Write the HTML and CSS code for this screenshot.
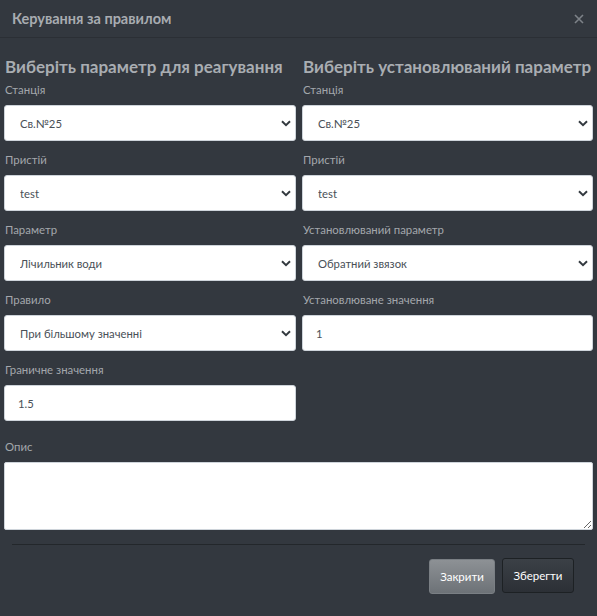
FILE: index.html
```html
<!DOCTYPE html>
<html lang="uk">
<head>
<meta charset="utf-8">
<title>Керування за правилом</title>
<link rel="stylesheet" href="styles.css">
</head>
<body>
<div class="modal">
  <div class="modal-header">
    <h5 class="modal-title">Керування за правилом</h5>
    <button class="close" type="button" aria-label="Close">
      <svg width="10" height="10" viewBox="0 0 10 10"><path d="M1 1L9 9M9 1L1 9" stroke="#7d8288" stroke-width="1.6"/></svg>
    </button>
  </div>
  <div class="modal-body">
    <div class="cols">
      <div class="col">
        <h4 class="col-title">Виберіть параметр для реагування</h4>
        <div class="group">
          <label class="lbl">Станція</label>
          <select class="ctl"><option>Св.№25</option></select>
        </div>
        <div class="group">
          <label class="lbl">Пристій</label>
          <select class="ctl"><option>test</option></select>
        </div>
        <div class="group">
          <label class="lbl">Параметр</label>
          <select class="ctl"><option>Лічильник води</option></select>
        </div>
        <div class="group">
          <label class="lbl">Правило</label>
          <select class="ctl"><option>При більшому значенні</option></select>
        </div>
        <div class="group">
          <label class="lbl">Граничне значення</label>
          <input class="ctl inp" type="text" value="1.5">
        </div>
      </div>
      <div class="col">
        <h4 class="col-title">Виберіть установлюваний параметр</h4>
        <div class="group">
          <label class="lbl">Станція</label>
          <select class="ctl"><option>Св.№25</option></select>
        </div>
        <div class="group">
          <label class="lbl">Пристій</label>
          <select class="ctl"><option>test</option></select>
        </div>
        <div class="group">
          <label class="lbl">Установлюваний параметр</label>
          <select class="ctl"><option>Обратний звязок</option></select>
        </div>
        <div class="group">
          <label class="lbl">Установлюване значення</label>
          <input class="ctl inp" type="text" value="1">
        </div>
      </div>
    </div>
    <div class="group desc">
      <label class="lbl">Опис</label>
      <textarea class="area"></textarea>
    </div>
  </div>
  <div class="modal-footer">
    <button class="btn btn-gray" type="button">Закрити</button>
    <button class="btn btn-dark" type="button">Зберегти</button>
  </div>
</div>
</body>
</html>
```
FILE: styles.css
```css
* { box-sizing: border-box; }
html, body {
  margin: 0;
  padding: 0;
  background: #33383f;
  font-family: Lato, "Open Sans", sans-serif;
}
.modal {
  width: 597px;
  min-height: 616px;
  background: #33383f;
}
.modal-header {
  height: 38px;
  display: flex;
  align-items: center;
  justify-content: space-between;
  padding: 0 13px 0 12px;
  border-bottom: 1px solid #2b2f35;
}
.modal-title {
  margin: 0;
  font-size: 14.5px;
  font-weight: 700;
  color: #a8acb1;
}
.close {
  background: none;
  border: 0;
  padding: 0;
  margin-top: 1px;
  width: 10px;
  height: 10px;
  display: flex;
}
.modal-body {
  padding: 17px 4px 0 4px;
}
.cols {
  display: grid;
  grid-template-columns: 292px 291px;
  column-gap: 6px;
}
.col-title {
  margin: 0 0 2px 1px;
  height: 24px;
  line-height: 24px;
  font-size: 17px;
  font-weight: 700;
  color: #a9adb2;
  white-space: nowrap;
}
.group {
  display: flex;
  flex-direction: column;
  margin-bottom: 10px;
}
.lbl {
  font-size: 11.4px;
  line-height: 18px;
  color: #a3a7ac;
  margin: 0 0 6px 1px;
}
.ctl {
  height: 36px;
  width: 100%;
  border: 1px solid #ced4da;
  border-radius: 3px;
  background-color: #fff;
  font-family: Lato, "Open Sans", sans-serif;
  font-size: 11.3px;
  color: #495057;
  padding: 0 30px 0 15px;
  margin: 0;
  outline: none;
}
select.ctl {
  appearance: none;
  -webkit-appearance: none;
  background-image: url("data:image/svg+xml;utf8,<svg xmlns='http://www.w3.org/2000/svg' width='10' height='7' viewBox='0 0 10 7'><path d='M1 1.2L5 5.2L9 1.2' fill='none' stroke='%23343a40' stroke-width='2'/></svg>");
  background-repeat: no-repeat;
  background-position: right 4px center;
  background-size: 10px 7px;
}
.inp {
  padding-left: 13px;
}
.desc {
  margin-top: 7px;
  margin-bottom: 0;
}
.area {
  width: 100%;
  height: 68px;
  border: 1px solid #ced4da;
  border-radius: 2px;
  background: #fff;
  margin: 0;
  font-family: Lato, sans-serif;
  font-size: 12px;
}
.modal-footer {
  margin: 14px 12px 0 12px;
  border-top: 1px solid #23272b;
  display: flex;
  justify-content: flex-end;
  gap: 7px;
  padding: 13px 11px 0 0;
}
.btn {
  height: 35px;
  font-family: Lato, "Open Sans", sans-serif;
  font-size: 11.5px;
  color: #fff;
  border-radius: 3px;
  padding: 0 6px;
}
.btn-gray {
  width: 66px;
  border: 1px solid #7a7f84;
  background: linear-gradient(#8d9195, #6d7277);
  margin-top: 1px;
}
.btn-dark {
  width: 72px;
  border: 1px solid #1d2124;
  background: linear-gradient(#3b4046, #2c3036);
}
```
